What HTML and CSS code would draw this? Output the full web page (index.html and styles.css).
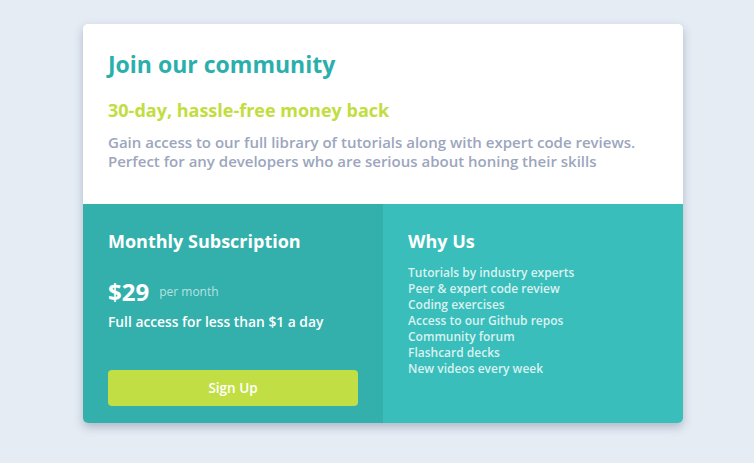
FILE: index.html
```html
<!DOCTYPE html>
<html lang="en">
<head>
<meta charset="utf-8">
<title>Single price grid</title>
<link rel="stylesheet" href="styles.css">
</head>
<body>
<main class="page">
  <section class="card">
    <div class="top">
      <h1 class="title">Join our community</h1>
      <h2 class="subtitle">30-day, hassle-free money back</h2>
      <p class="desc">Gain access to our full library of tutorials along with expert code reviews. Perfect for any developers who are serious about honing their skills</p>
    </div>
    <div class="bottom">
      <div class="sub">
        <h3 class="heading">Monthly Subscription</h3>
        <div class="price"><span class="amount">$29</span><span class="per">per month</span></div>
        <p class="note">Full access for less than $1 a day</p>
        <button class="btn">Sign Up</button>
      </div>
      <div class="why">
        <h3 class="heading">Why Us</h3>
        <ul class="list">
          <li>Tutorials by industry experts</li>
          <li>Peer &amp; expert code review</li>
          <li>Coding exercises</li>
          <li>Access to our Github repos</li>
          <li>Community forum</li>
          <li>Flashcard decks</li>
          <li>New videos every week</li>
        </ul>
      </div>
    </div>
  </section>
</main>
</body>
</html>
```
FILE: styles.css
```css
* { box-sizing: border-box; }
html, body { margin: 0; padding: 0; }
body {
  background: #e5ecf4;
  font-family: "Open Sans", "Liberation Sans", sans-serif;
  height: 463px;
}
.page {
  display: flex;
  justify-content: center;
  padding-top: 24px;
  padding-left: 12px;
}
.card {
  width: 600px;
  border-radius: 5px;
  overflow: hidden;
  box-shadow: 0 4px 10px rgba(70, 90, 120, 0.35);
}
.top {
  background: #fff;
  height: 180px;
  padding: 26px 25px 0;
}
.title {
  margin: 0;
  font-size: 23px;
  line-height: 28px;
  font-weight: 700;
  color: #2aafad;
}
.subtitle {
  margin: 20px 0 0;
  font-size: 18px;
  line-height: 24px;
  font-weight: 700;
  color: #c1dd3e;
}
.desc {
  margin: 11px 0 0;
  font-size: 15px;
  line-height: 19px;
  font-weight: 600;
  color: #9ca6bd;
}
.bottom {
  display: flex;
  height: 219px;
}
.sub, .why {
  flex: 1;
  padding: 26px 25px 0;
  color: #fff;
}
.sub { background: #33b0ac; }
.why { background: #39bebb; }
.heading {
  margin: 0;
  font-size: 18px;
  line-height: 22px;
  font-weight: 700;
}
.price {
  display: flex;
  align-items: center;
  margin-top: 26px;
  height: 26px;
}
.amount {
  font-size: 24px;
  font-weight: 700;
}
.per {
  margin-left: 10px;
  font-size: 12px;
  color: rgba(255, 255, 255, 0.65);
}
.note {
  margin: 9px 0 0;
  font-size: 13.8px;
  line-height: 18px;
  font-weight: 600;
}
.btn {
  display: block;
  margin-top: 39px;
  width: 250px;
  height: 36px;
  border: none;
  border-radius: 4px;
  background: #c1df44;
  color: #fff;
  font-family: inherit;
  font-size: 13.5px;
  font-weight: 600;
}
.list {
  list-style: none;
  margin: 13px 0 0;
  padding: 0;
  font-size: 12px;
  line-height: 16px;
  color: rgba(255, 255, 255, 0.82);
  font-weight: 600;
}
```
